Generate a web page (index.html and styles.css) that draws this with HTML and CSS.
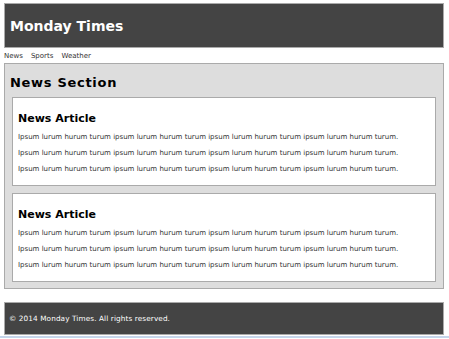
FILE: index.html
```
<!DOCTYPE html>
<html lang="en">
  <head>
    <meta charset="UTF-8" />
    <meta name="viewport" content="width=device-width, initial-scale=1.0" />
    <title>Monday Times</title>
    <link rel="stylesheet" href="styles.css">
  </head>

  <body>
    <header class="masthead">
      <h1 class="site-title">Monday Times</h1>
    </header>

    <nav class="topnav">
      <a href="#">News</a>
      <a href="#">Sports</a>
      <a href="#">Weather</a>
    </nav>

    <section class="news">
      <h2 class="news-title">News Section</h2>

      <article class="article">
        <h3 class="article-title">News Article</h3>
        <p>Ipsum lurum hurum turum ipsum lurum hurum turum ipsum lurum hurum turum ipsum lurum hurum turum.</p>
        <p>Ipsum lurum hurum turum ipsum lurum hurum turum ipsum lurum hurum turum ipsum lurum hurum turum.</p>
        <p>Ipsum lurum hurum turum ipsum lurum hurum turum ipsum lurum hurum turum ipsum lurum hurum turum.</p>
      </article>

      <article class="article">
        <h3 class="article-title">News Article</h3>
        <p>Ipsum lurum hurum turum ipsum lurum hurum turum ipsum lurum hurum turum ipsum lurum hurum turum.</p>
        <p>Ipsum lurum hurum turum ipsum lurum hurum turum ipsum lurum hurum turum ipsum lurum hurum turum.</p>
        <p>Ipsum lurum hurum turum ipsum lurum hurum turum ipsum lurum hurum turum ipsum lurum hurum turum.</p>
      </article>
    </section>

    <footer class="site-footer">
      <p>&copy; 2014 Monday Times. All rights reserved.</p>
    </footer>
  </body>
</html>
```

FILE: styles.css
```
html {
  border-bottom: 2px solid #c5d5ea;
}

body {
  margin: 3px 5px 0 4px;
  padding-bottom: 1px;
  font-family: "DejaVu Sans", Verdana, sans-serif;
  color: #333;
}

.masthead {
  height: 43px;
  display: flex;
  align-items: center;
  padding: 0 5px;
  background-color: #444;
  border: 1px solid #aaa;
}

.site-title {
  margin: 0;
  font-size: 14px;
  color: #fff;
}

/* nav links */
.topnav {
  display: flex;
  gap: 8px;
  padding: 4px 0 3px;
  font-size: 7px;
  line-height: 8px;
}

.topnav a {
  color: #333;
  text-decoration: none;
}

.news {
  padding: 0 5px 6px;
  background-color: #ddd;
  border: 1px solid #aaa;
}

.news-title {
  margin: 10px 0 6px;
  font-size: 13px;
  line-height: 17px;
  letter-spacing: 0.7px;
  color: #000;
}

.article {
  padding: 7px 5px 4px;
  margin: 0 2px 7px;
  background-color: #fff;
  border: 1px solid #aaa;
}

.article:last-child {
  margin-bottom: 0;
}

.article-title {
  margin: 7px 0 8px;
  font-size: 11px;
  line-height: 13px;
  color: #000;
}

.article p {
  margin: 0 0 8px;
  font-size: 7px;
  line-height: 8px;
}

.site-footer {
  margin-top: 13px;
  height: 31px;
  display: flex;
  align-items: center;
  padding: 0 4px;
  background-color: #444;
  border: 1px solid #aaa;
}

.site-footer p {
  margin: 0;
  font-size: 7.3px;
  letter-spacing: 0.1px;
  color: #fff;
}
```
